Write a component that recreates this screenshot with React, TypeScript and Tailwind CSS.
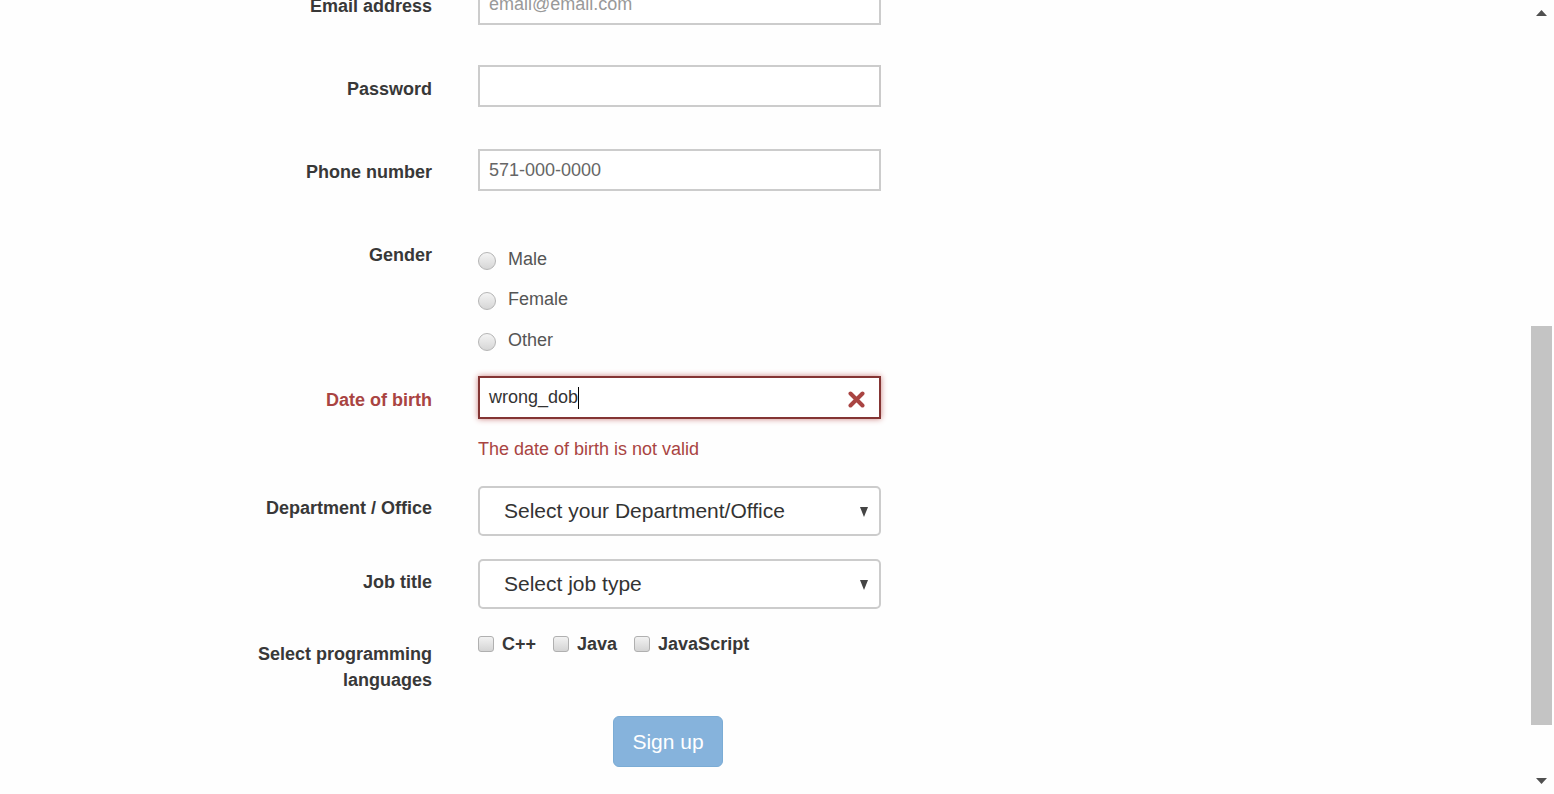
import React from 'react';

const labelCls = 'w-[432px] shrink-0 text-right text-[18px] font-bold leading-6 text-[#383838]';
const inputCls =
  'w-[403px] h-[42px] border-2 border-[#ccc] bg-white px-[9px] text-[18px] text-[#666] outline-none';

function Radio({ label }: { label: string }) {
  return (
    <div className="flex items-center h-10">
      <span className="w-[18px] h-[18px] mt-1 rounded-full border border-[#b5b5b5] bg-gradient-to-b from-[#f4f4f4] to-[#d6d6d6]" />
      <span className="ml-3 text-[18px] text-[#555]">{label}</span>
    </div>
  );
}

function Check({ label }: { label: string }) {
  return (
    <div className="flex items-center mr-[17px]">
      <span className="w-4 h-4 rounded-[3px] border border-[#b0b0b0] bg-gradient-to-b from-[#f2f2f2] to-[#d4d4d4]" />
      <span className="ml-[8px] text-[18px] font-bold text-[#383838]">{label}</span>
    </div>
  );
}

function Caret() {
  return (
    <svg className="w-[8px] h-[11px]" viewBox="0 0 8 11">
      <path d="M0 1h8L4 11z" fill="#444" />
    </svg>
  );
}

export default function App() {
  return (
    <div
      className="flex h-[794px] w-full overflow-hidden bg-[#fefefe]"
      style={{ fontFamily: '"Liberation Sans", Arial, sans-serif' }}
    >
      <div className="flex-1 flex flex-col">
        {/* Email */}
        <div className="flex gap-[46px] mt-[-17px]">
          <label className={`${labelCls} pt-[11px]`}>Email address</label>
          <div className={`${inputCls} flex items-center text-[#999]`}>email@email.com</div>
        </div>

        {/* Password */}
        <div className="flex gap-[46px] mt-[40px]">
          <label className={`${labelCls} pt-[12px]`}>Password</label>
          <div className={inputCls} />
        </div>

        {/* Phone */}
        <div className="flex gap-[46px] mt-[42px]">
          <label className={`${labelCls} pt-[11px]`}>Phone number</label>
          <div className={`${inputCls} flex items-center`}>571-000-0000</div>
        </div>

        {/* Gender */}
        <div className="flex gap-[46px] mt-[41px]">
          <label className={`${labelCls} pt-[11px]`}>Gender</label>
          <div className="flex flex-col pt-[7px]">
            <Radio label="Male" />
            <Radio label="Female" />
            <div className="mt-px">
              <Radio label="Other" />
            </div>
          </div>
        </div>

        {/* Date of birth */}
        <div className="flex gap-[46px] mt-[16px]">
          <label className={`${labelCls} pt-[12px] !text-[#a94442]`}>Date of birth</label>
          <div className="w-[403px] h-[43px] border-2 border-[#843534] bg-white shadow-[0_0_6px_#ce8483] pl-[9px] pr-[14px] flex items-center justify-between">
            <span className="text-[18px] text-[#333] flex items-center">
              wrong_dob<span className="w-px h-[22px] bg-black" />
            </span>
            <svg className="w-[17px] h-[17px] mt-1" viewBox="0 0 17 17">
              <path d="M2.5 2.5l12 12M14.5 2.5l-12 12" stroke="#a94442" strokeWidth="4" strokeLinecap="round" />
            </svg>
          </div>
        </div>
        <div className="flex gap-[46px] mt-[18px]">
          <div className="w-[432px] shrink-0" />
          <div className="text-[18px] leading-6 text-[#a94442]">The date of birth is not valid</div>
        </div>

        {/* Department */}
        <div className="flex gap-[46px] mt-[25px]">
          <label className={`${labelCls} pt-[10px]`}>Department / Office</label>
          <div className="w-[403px] h-[50px] rounded-[5px] border-2 border-[#ccc] bg-white pl-[24px] pr-[11px] flex items-center justify-between">
            <span className="text-[21px] text-[#333]">Select your Department/Office</span>
            <Caret />
          </div>
        </div>

        {/* Job title */}
        <div className="flex gap-[46px] mt-[23px]">
          <label className={`${labelCls} pt-[11px]`}>Job title</label>
          <div className="w-[403px] h-[50px] rounded-[5px] border-2 border-[#ccc] bg-white pl-[24px] pr-[11px] flex items-center justify-between">
            <span className="text-[21px] text-[#333]">Select job type</span>
            <Caret />
          </div>
        </div>

        {/* Languages */}
        <div className="flex gap-[46px] mt-[22px]">
          <label className={`${labelCls} !leading-[26px] pt-[10px]`}>
            Select programming
            <br />
            languages
          </label>
          <div className="flex items-start h-6 leading-6 pt-px">
            <Check label="C++" />
            <Check label="Java" />
            <Check label="JavaScript" />
          </div>
        </div>

        {/* Submit */}
        <div className="flex gap-[46px] mt-[23px]">
          <div className="w-[432px] shrink-0" />
          <button className="ml-[135px] w-[110px] h-[51px] rounded-[6px] border border-[#7bacd5] bg-[#86b3dc] text-[21px] text-white">
            Sign up
          </button>
        </div>
      </div>

      {/* Scrollbar */}
      <div className="w-[23px] shrink-0 flex flex-col items-start">
        <div className="h-[26px] w-[21px] flex items-center justify-center">
          <svg className="w-[11px] h-[6px]" viewBox="0 0 11 6">
            <path d="M0 6L5.5 0L11 6z" fill="#505050" />
          </svg>
        </div>
        <div className="h-[300px]" />
        <div className="w-[21px] h-[399px] bg-[#c4c4c4]" />
        <div className="flex-1" />
        <div className="h-[26px] w-[21px] flex items-center justify-center">
          <svg className="w-[11px] h-[6px]" viewBox="0 0 11 6">
            <path d="M0 0h11L5.5 6z" fill="#505050" />
          </svg>
        </div>
      </div>
    </div>
  );
}
